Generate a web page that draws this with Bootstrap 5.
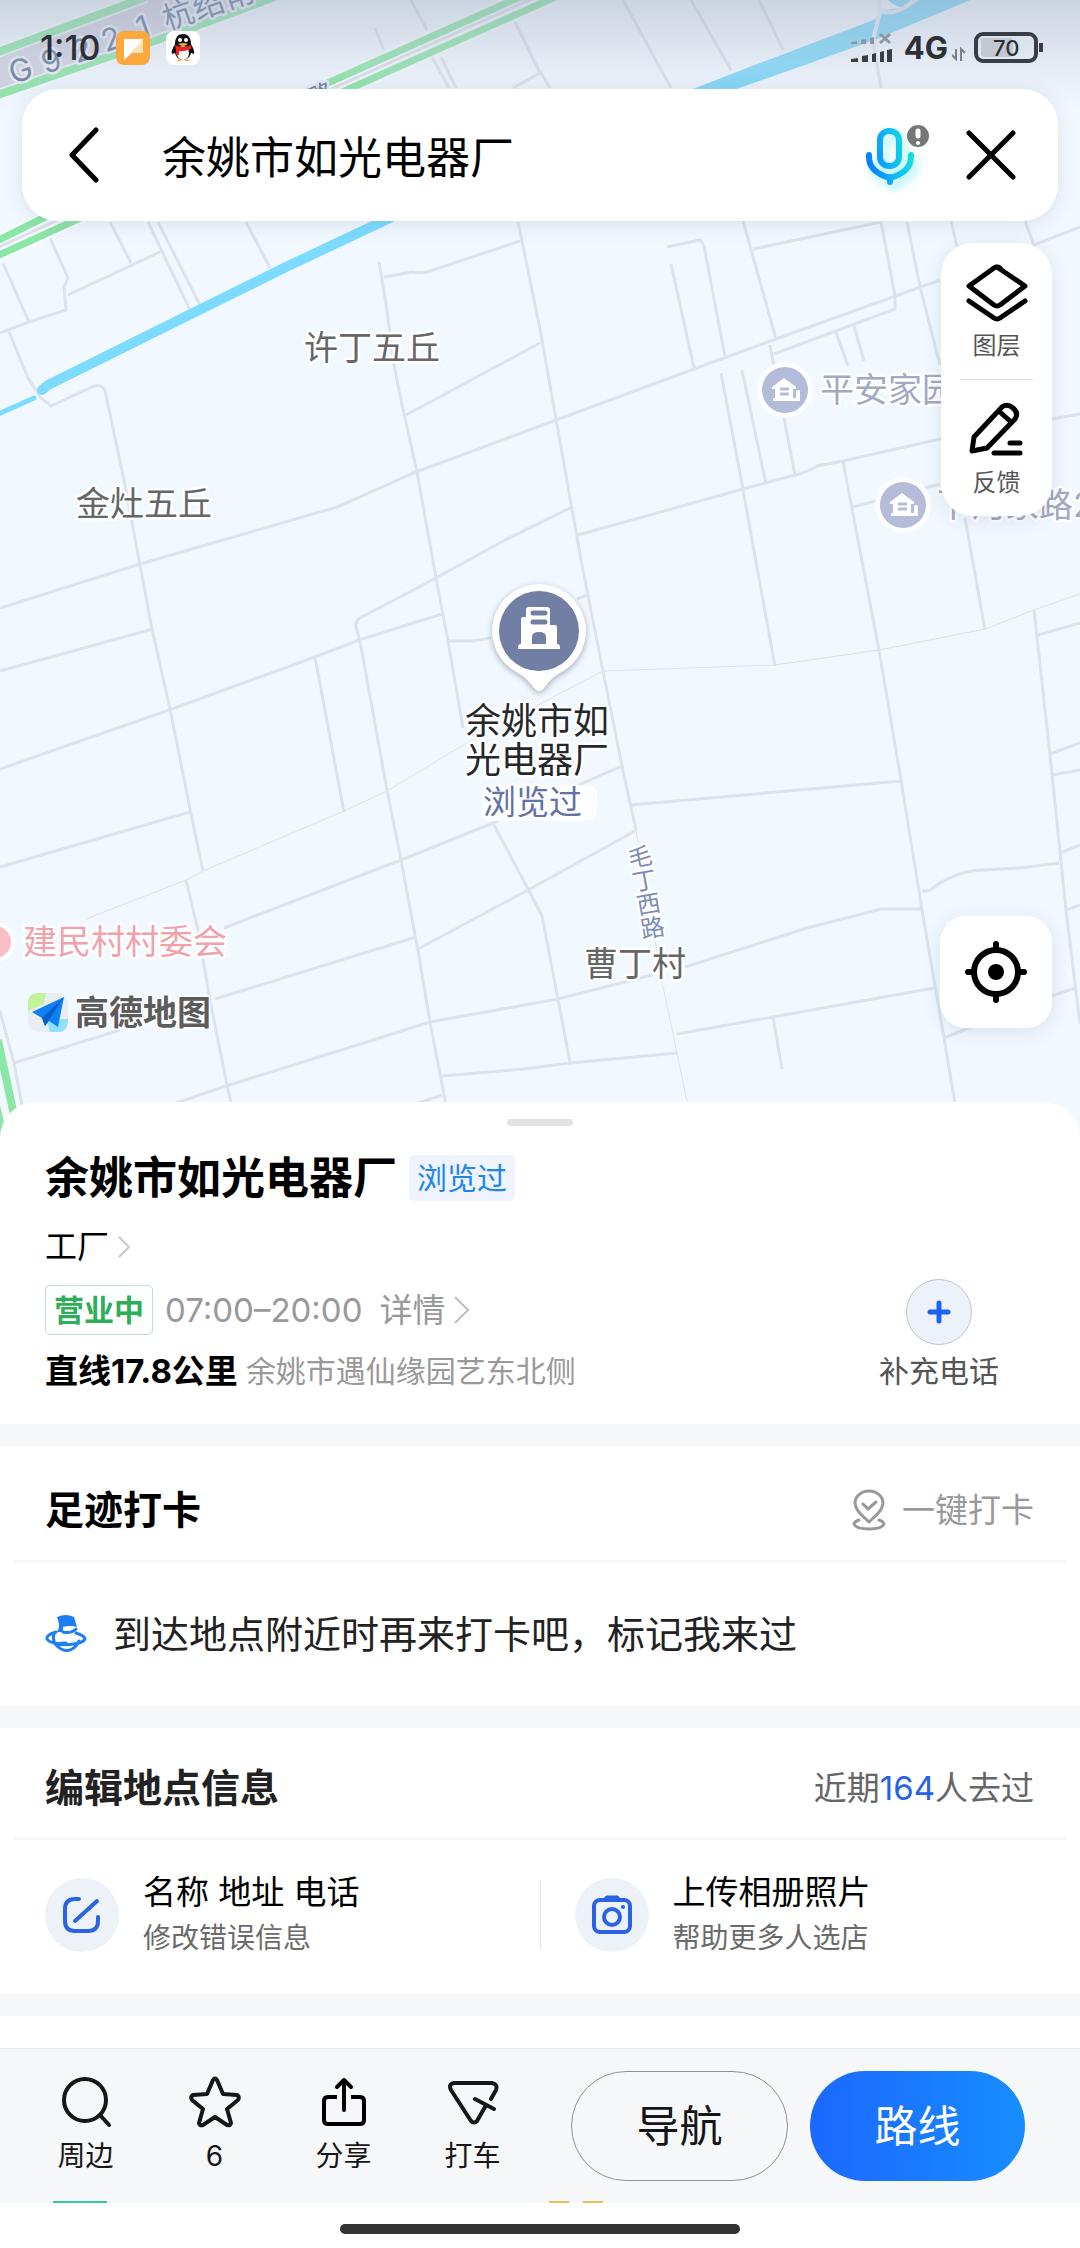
<!DOCTYPE html>
<html lang="zh-CN">
<head>
<meta charset="utf-8">
<meta name="viewport" content="width=device-width, initial-scale=1">
<title>余姚市如光电器厂</title>
<link href="https://cdn.jsdelivr.net/npm/bootstrap@5.3.0/dist/css/bootstrap.min.css" rel="stylesheet">
<style>
  body { font-family: Inter, "Noto Sans CJK SC", sans-serif; color: #000; background: #fff; font-size: 33px; line-height: 44px; }
  svg { display: block; flex-shrink: 0; }
  .plain { border: 0; background: none; padding: 0; color: inherit; }
  .stage { min-height: 1140px; background: #f1f8ff; padding-bottom: 112px; }
  .map-canvas { position: absolute; inset: 0; width: 100%; height: 100%; }
  .minor-roads path { fill: none; stroke: #dce3eb; stroke-width: 3; }
  .minor-roads .faint { stroke-width: 1; }
  .map-text { font-size: 34px; fill: #666; stroke: #fff; stroke-width: 5px; stroke-linejoin: round; paint-order: stroke; }
  .road-text { font-size: 31px; fill: #62779a; stroke: #e9edf6; }
  .street-text { font-size: 24px; fill: #7d8db8; writing-mode: vertical-rl; text-orientation: upright; }
  .poi-text { fill: #a3a8c3; }
  .status-bar { height: 89px; padding: 7px 36px 0 40px; color: #2c2f36; }
  .status-shade { position: absolute; inset: 0 0 auto 0; height: 110px; background: linear-gradient(rgba(165,175,195,.5), rgba(190,199,215,.3) 55%, rgba(240,247,255,0)); }
  .clock { font-size: 34px; font-weight: 500; }
  .net { font-size: 31px; font-weight: 700; }
  .float-card { background: #fff; box-shadow: 0 4px 20px rgba(60,80,110,.13); }
  .search-card { margin: 0 22px; height: 132px; border-radius: 36px; padding: 0 42px 0 46px; }
  .search-card input { font-size: 44px; height: 66px; margin-left: 62px; min-width: 0; outline: 0; color: #000; }
  .mic { margin-right: 29px; }
  .tool-card { width: 111px; border-radius: 32px; padding: 17px 0; }
  .tool-card button { font-size: 24px; line-height: 32px; color: #555; }
  .tool-card hr { margin: 17px 19px; border-color: #ddd; opacity: 1; }
  .locate { width: 112px; height: 112px; border-radius: 26px; }
  .side { padding: 22px 28px 0 0; }
  .sheet { margin-top: -38px; background: #fff; border-radius: 36px 36px 0 0; padding-top: 17px; }
  .grip { width: 66px; height: 7px; border-radius: 4px; background: #e2e2e2; }
  .px { padding-left: 45px; padding-right: 46px; }
  .intro { padding-bottom: 31px; }
  .title-row { padding-top: 29px; gap: 12px; }
  .facts { padding-top: 24px; }
  .place-name { font-size: 44px; line-height: 46px; font-weight: 700; }
  .seen-tag { font-size: 30px; line-height: 46px; padding: 0 8px; border-radius: 5px; background: #eef3fd; color: #1e86ea; }
  .open-tag { font-size: 30px; line-height: 48px; font-weight: 700; padding: 0 8px; margin-right: 12px; border: 1px solid #c3ddd0; border-radius: 5px; color: #2dae58; }
  .type-link { font-size: 32px; }
  .more-link { margin-left: 17px; }
  .where { margin-top: 14px; gap: 8px; }
  .soft { color: #999; }
  .t30 { font-size: 30px; }
  .add-circle { width: 66px; height: 66px; border: 1px solid #c2c5cb; border-radius: 50%; background: #ecf2f9; }
  .phone-add { margin-right: 35px; color: #555; }
  .band { height: 22px; background: #f5f6f8; }
  .sec-head { height: 114px; padding-top: 14px; }
  .sec-head h2 { font-size: 39px; line-height: 52px; font-weight: 700; }
  .edit-sec .sec-head { height: 110px; padding-top: 10px; color: #666; }
  .edit-sec h2 { color: #222; }
  .visits { color: #2562e6; }
  .rule { height: 2px; margin: 0 14px; background: #f6f6f7; }
  .checkin { height: 144px; font-size: 38px; color: #222; gap: 26px; }
  .edit-row { height: 154px; padding-bottom: 4px; }
  .edit-row .split { width: 1px; height: 70px; background: #e6e6e6; margin-right: 34px; }
  .edit-item { line-height: 46px; text-align: left; color: #000; }
  .edit-item .sub { font-size: 28px; color: #6a6a6a; }
  .disc { width: 74px; height: 74px; border-radius: 50%; background: #edf2f9; }
  .dock { background: #f5f7f9; border-top: 1px solid #e9ebed; padding: 22px 55px 22px 21px; gap: 34px; margin-top: 32px; }
  .dock .tabs { flex: 516 1 0; }
  .dock .tabs button { font-size: 28px; line-height: 40px; color: #161616; }
  .dock .pills { flex: 454 1 0; gap: 22px; }
  .pill { height: 110px; border-radius: 55px; font-size: 43px; flex: 1 1 0; }
  .pill-line { border: 1px solid #8e9093; background: #f5f7f9; color: #161616; }
  .pill-go { border: 0; background: linear-gradient(90deg, #1b68ff, #178dff); color: #fff; }
  .home-zone { height: 45px; background: #fff; padding-top: 21px; }
  .home-bar { width: 37%; height: 10px; border-radius: 5px; background: #333; }
  .peek { position: absolute; top: -2px; height: 2px; }
  .peek-green { left: 53px; width: 54px; background: #35c9a3; }
  .peek-gold { left: 549px; width: 54px; background: linear-gradient(90deg, #e6bd55 20px, transparent 20px 34px, #e6bd55 34px); }
</style>
<script src="https://cdn.jsdelivr.net/npm/bootstrap@5.3.0/dist/js/bootstrap.bundle.min.js"></script>
</head>
<body>
<div class="stage position-relative d-flex flex-column overflow-hidden">
  <svg class="map-canvas" viewBox="0 0 1080 1140" preserveAspectRatio="xMidYMin slice" role="img" aria-label="地图">
    <!-- motorway -->
    <path d="M0 51L141-1H268L186 30L0 94Z" fill="#d0d2e0"/>
    <g fill="none" stroke="#fff" stroke-width="12" opacity=".6"><path d="M-5 53L146-3M-5 96L186 30L275-3M-5 242L45 217L330 82L520-3M-5 257L76 220L351 88L560-5"/></g>
    <path d="M-5 249L60 219L340 85L536-3" fill="none" stroke="#dde0e9" stroke-width="3"/>
    <g fill="none" stroke="#8ce6a8" stroke-width="8"><path d="M-5 53L146-3M-5 96L186 30L275-3"/><path stroke-width="7" d="M-5 242L45 217L330 82L520-3M-5 257L76 220L351 88L560-5"/><path d="M-2 1040L15 1120M-10 1080L4 1140"/></g>
    <g class="minor-roads">
      <path d="M411 0L427 30M432 57L449 88M441 57L456 88M375 28L384 50M515 22L540 73L513 88M540 71L550 88M623 0L671 88M691 0L731 70M759 0L783 50M110 222L131 263M148 222L191 312M158 222L200 305M246 222L270 268"/>
      <path d="M50 238L68 278L64 287L66 310L29 322L0 333M68 295L160 252M3 263L29 322M9 332L28 378L41 398L51 406L94 386Q102 384 105 391L107 400L124 480L140 565L152 629L170 709L191 814L203 871"/>
      <path d="M379 262L387 310L394 365L401 400L417 472L436 578L448 641L463 728M384 277L412 272Q422 274 430 271L520 241M518 222L540 329L581 560L603 671M406 415L540 343"/>
      <path d="M0 608L140 564L337 507L416 472L540 426L694 369L776 339L940 280M0 671L153 629M0 769L169 710L315 657L359 640L442 614M448 641L472 641L491 638M315 657L344 812"/>
      <path d="M572 507L505 540L436 578L360 618Q355 621 356 627L360 641L387 790L401 860L418 951L430 1022L447 1110M0 867L190 812M186 880L198 930L210 1000L227 1085L233 1110M224 928L401 860L493 823L581 784L622 766"/>
      <path d="M493 823L528 889L542 916L558 999L570 1063M418 949L528 890L635 831M215 999L416 937M170 1105L226 1086L386 1036L430 1022L558 999L652 975M442 1076L524 1069L570 1063L677 1053M410 1106L442 1095M14 1063L120 1030M0 1011L14 1063L23 1110"/>
      <path d="M577 599L587 595M603 671L622 766L636 830M752 540L775 666M843 461L858 540L879 650L901 780L922 910L944 1038L956 1110M965 518L985 630M1034 610L1050 755L1066 910L1080 1024M1038 635L1080 623M1050 754L1080 743M1052 775L1080 770M1060 853L1080 845M1066 910L1080 905M1040 1000L1075 988"/>
      <path d="M630 805L901 781M922 891L929 891Q940 882 950 878Q966 870 983 870L1020 868L1059 863M685 967L807 928L881 909L921 909M677 1034L773 1017L934 988M773 1017L782 1069M944 1038L971 1027"/>
      <path d="M667 247L700 240L704 246L725 357M671 264L694 368M743 221L776 339M753 249L881 222L895 296L895 309L774 354M907 222L920 287L940 365M951 221L957 246M1025 221L1034 245L1080 227M836 332L848 366M854 326L864 361M770 345L784 418L795 475M721 373L743 489L752 540M742 370L766 484M578 535L743 489L795 475Q806 473 817 466L843 461L940 439L1080 414M853 507L940 484"/>
      <path class="faint" d="M86 919L186 880L203 871L344 811L387 791L465 744L538 705L603 671L775 665L879 650L985 629L1034 610L1080 594M636 830L662 982L689 1110"/>
    </g>
    <g fill="none" stroke="#7cdbff" stroke-linecap="round">
      <path stroke-width="5" d="M-4 415L34 398"/><path stroke-width="10" stroke-linejoin="round" d="M42 390L48 385L189 315L286 267L392 217L500 170"/>
    </g>
    <path fill="#7cd9fa" d="M500 165L698 87L747 68L871 21L876 19L880 11L905 7L919-2H975L877 39L802 66L745 86L500 175Z"/>
    <path d="M888 0Q895 8 906 7L912-2" fill="#7cd9fa"/>
    <path d="M879-2L880 12L873 40M881 12Q895 14 905 7L919-2" fill="none" stroke="#e6eaf2" stroke-width="4"/>
    <path d="M873 40L881 88" fill="none" stroke="#dce3eb" stroke-width="3"/>
    <g class="map-text road-text"><text transform="rotate(-19)" x="-15 19 52 83 120 148 180 212" y="84 85 85 84 83 83 83 83">G9221杭绍甬</text><text transform="translate(314 107) rotate(-24)" style="font-size:24px">路</text></g>
    <g class="map-text">
      <text x="304" y="360">许丁五丘</text><text x="76" y="516">金灶五丘</text><text x="584" y="976">曹丁村</text>
      <text class="poi-text" x="820" y="402">平安家园</text><text class="poi-text" x="937" y="517">下河家路2</text>
      <text x="23" y="954" style="fill:#efa2ab">建民村村委会</text>
    </g>
    <text class="map-text street-text" transform="translate(636 845) rotate(-10)">毛丁西路</text>
    <defs>
      <g id="home-poi"><circle r="28" fill="#fff" opacity=".85"/><circle r="23" fill="#b4bcda"/><path d="M-13-3L-1-12L11-3V-1H8V8H11V1Q13-1 15 1V11H-12V8H-10V-1H-13Z" fill="#fff"/><path d="M-5-1H4M-5 4H4" stroke="#b4bcda" stroke-width="3"/></g>
    </defs>
    <use href="#home-poi" x="785" y="390"/><use href="#home-poi" x="903" y="505"/>
    <circle cx="-5" cy="942" r="20" fill="#fff"/><circle cx="-5" cy="942" r="16" fill="#f9bfc5"/>
    <!-- map brand -->
    <g><rect x="28" y="993" width="40" height="39" rx="10" fill="#e9eef2"/><path d="M28 1011V1003Q28 993 38 993H46L44 1004Z" fill="#c2f29a"/><path d="M47 1022L60 1019H68Q68 1032 58 1032H50Z" fill="#8fe0fb"/><path d="M32 1012L64 997L58 1027L49 1021L45 1026L42 1018Z" fill="#0f80f5"/><path d="M42 1018L64 997L45 1026Z" fill="#0a5fd0"/></g>
    <text class="map-text" x="75" y="1025" style="font-weight:700;fill:#5c5c5c;stroke-width:3px">高德地图</text>
    <!-- selected place -->
    <g>
      <path d="M539 584a47 47 0 0 1 21 89q-9 5-15 14-6 8-12 0-6-9-15-14a47 47 0 0 1 21-89Z" fill="#fff" style="filter:drop-shadow(0 2px 3px rgba(70,80,100,.45))"/>
      <circle cx="539" cy="631" r="40" fill="#707fa3"/>
      <path d="M526 610q0-3 3-3h18q3 0 3 3v15h5q2 0 2 2v17q3 0 3 3v2h-42v-2q0-3 3-3v-25q0-2 2-2h3Z" fill="#fff"/><path d="M533 613h12M533 622h12" stroke="#707fa3" stroke-width="5" stroke-linecap="round"/><path d="M532 644v-7q0-5 7-5t7 5v7Z" fill="#707fa3"/>
    </g>
    <g class="map-text" style="font-size:36px;fill:#25272d"><text x="465" y="734">余姚市如</text><text x="465" y="773">光电器厂</text></g>
    <rect x="482" y="785" width="115" height="36" rx="8" fill="#fff" opacity=".8"/>
    <text class="map-text" x="483" y="814" style="font-size:33px;fill:#6272a4">浏览过</text>
  </svg>
  <div class="status-shade"></div>

  <div class="status-bar position-relative d-flex align-items-center">
    <span class="clock">1:10</span>
    <svg class="ms-3" width="34" height="34" viewBox="0 0 34 34"><rect width="34" height="34" rx="8" fill="#fca83f"/><path d="M8 8h19v14H16l-8 7Z" fill="#fff"/><path d="M27 8v14H16l-4 3Z" fill="#fde0b4"/></svg>
    <svg class="ms-3" width="34" height="34" viewBox="0 0 34 34"><rect width="34" height="34" rx="8" fill="#fff"/><path d="M17 3c-6 0-8 5-8 10-2 4-4 7-3 10l3-1c1 4 4 7 8 7s7-3 8-7l3 1c1-3-1-6-3-10 0-5-2-10-8-10Z" fill="#111"/><ellipse cx="17" cy="22" rx="6" ry="7" fill="#fff"/><path d="M9 14q8 4 16 0v4q-8 3-12 2v4h-3v-5Z" fill="#e22"/><circle cx="14" cy="9" r="2" fill="#fff"/><circle cx="20" cy="9" r="2" fill="#fff"/><path d="M12 13q5-2 10 0-5 4-10 0ZM10 30q3-3 6 0ZM18 30q3-3 6 0Z" fill="#f5a623"/></svg>
    <svg class="ms-auto" width="42" height="32" viewBox="0 0 42 32"><g fill="#8d95a3"><path d="M1 10l6-1v3H1ZM11 8l5-1v5h-5ZM20 6l4-1v7h-4Z"/><path d="M30 2l10 9M40 2L30 11" stroke="#8d95a3" stroke-width="3"/></g><path d="M1 27l7-1v4H1ZM12 24l6-1v7h-6ZM22 22l4-1v9h-4ZM30 20l4-1v11h-4ZM37 18l5-1v13h-5Z" fill="#3a3d44"/></svg>
    <span class="net ms-2 ps-1">4G</span>
    <svg class="ms-1" width="14" height="30" viewBox="0 0 14 30"><path d="M4 16v10l-4-4M9 28V16l4 4" fill="none" stroke="#7a7f8a" stroke-width="2"/></svg>
    <svg class="ms-2" width="70" height="32" viewBox="0 0 70 32"><rect x="2" y="2" width="60" height="27" rx="7" fill="none" stroke="#3a3d44" stroke-width="4"/><rect x="7" y="6" width="32" height="19" rx="3" fill="#c3c8d1"/><path d="M67 11v9" stroke="#3a3d44" stroke-width="4"/><text x="19" y="24" font-size="22" font-weight="500" fill="#2c2f36">70</text></svg>
  </div>

  <div class="search-card float-card position-relative d-flex align-items-center">
    <button class="plain" aria-label="返回"><svg width="32" height="56" viewBox="0 0 32 56"><path d="M28 3L4 28L28 53" fill="none" stroke="#000" stroke-width="5" stroke-linecap="round" stroke-linejoin="round"/></svg></button>
    <input class="plain flex-grow-1" type="text" aria-label="搜索地点" value="余姚市如光电器厂">
    <button class="plain mic" aria-label="语音搜索"><svg width="76" height="76" viewBox="0 0 76 76"><defs><linearGradient id="mic" gradientUnits="userSpaceOnUse" x1="5" y1="40" x2="53" y2="30"><stop stop-color="#0a7bff"/><stop offset=".5" stop-color="#12b8f5"/><stop offset="1" stop-color="#10e8d8"/></linearGradient></defs>
      <g fill="none" stroke="url(#mic)" stroke-linecap="round" style="filter:drop-shadow(4px 6px 5px rgba(60,225,235,.45))"><rect x="19" y="14" width="19" height="35" rx="9" stroke-width="6"/><path d="M8 38v2q0 15 21 21Q50 55 50 40v-2M29 60v5" stroke-width="6"/></g><circle cx="57" cy="19" r="11" fill="#777"/><path d="M57 14v5" stroke="#fff" stroke-width="5" stroke-linecap="round"/><circle cx="57" cy="26" r="2" fill="#fff"/></svg></button>
    <button class="plain" aria-label="清除"><svg width="50" height="50" viewBox="0 0 50 50"><path d="M3 3L47 47M47 3L3 47" stroke="#000" stroke-width="5" stroke-linecap="round"/></svg></button>
  </div>

  <div class="side position-relative d-flex flex-column align-items-end flex-grow-1">
    <div class="tool-card float-card d-flex flex-column">
      <button class="plain d-flex flex-column align-items-center"><svg width="66" height="70" viewBox="0 0 66 70"><g fill="none" stroke="#000" stroke-width="5" stroke-linejoin="round" stroke-linecap="round"><path d="M33 7L61 26L36 45Q33 47 30 45L5 26L30 8Q33 6 36 8Z"/><path d="M5 41L30 58Q33 60 36 58L61 41"/></g></svg>图层</button>
      <hr>
      <button class="plain d-flex flex-column align-items-center"><svg width="66" height="70" viewBox="0 0 66 70"><g fill="none" stroke="#000" stroke-width="5" stroke-linejoin="round" stroke-linecap="round"><path d="M8 54L10 40L38 10Q43 6 49 11Q55 16 51 22L23 51Z"/><path d="M36 15L47 25M46 46H56M30 56H56"/></g></svg>反馈</button>
    </div>
    <button class="plain locate float-card mt-auto d-flex align-items-center justify-content-center" aria-label="定位"><svg width="62" height="62" viewBox="0 0 62 62"><circle cx="31" cy="31" r="22" fill="none" stroke="#000" stroke-width="6"/><circle cx="31" cy="31" r="8"/><path d="M31 3v6M31 53v6M3 31h6M53 31h6" stroke="#000" stroke-width="6" stroke-linecap="round"/></svg></button>
  </div>
</div>

<main class="sheet position-relative">
  <div class="grip mx-auto"></div>
  <section class="px intro">
    <div class="title-row d-flex align-items-center"><h1 class="place-name m-0">余姚市如光电器厂</h1><span class="seen-tag">浏览过</span></div>
    <div class="facts d-flex justify-content-between align-items-end">
      <div>
        <button class="plain type-link d-flex align-items-center gap-2">工厂 <svg width="14" height="24" viewBox="0 0 14 24"><path d="M2 2L12 12L2 22" fill="none" stroke="#c8c8c8" stroke-width="2"/></svg></button>
        <div class="d-flex align-items-center soft mt-3"><span class="open-tag">营业中</span><span>07:00–20:00</span>
          <button class="plain more-link d-flex align-items-center gap-2">详情 <svg width="18" height="30" viewBox="0 0 18 30"><path d="M2 2L15 15L2 28" fill="none" stroke="#bdbdbd" stroke-width="2"/></svg></button></div>
        <div class="where d-flex"><strong>直线17.8公里</strong><span class="soft t30">余姚市遇仙缘园艺东北侧</span></div>
      </div>
      <button class="plain phone-add d-flex flex-column align-items-center gap-1 t30"><span class="add-circle d-flex align-items-center justify-content-center"><svg width="24" height="24" viewBox="0 0 24 24"><path d="M12 3v18M3 12h18" stroke="#1f62ef" stroke-width="5" stroke-linecap="round"/></svg></span>补充电话</button>
    </div>
  </section>
  <div class="band"></div>
  <section>
    <div class="sec-head px d-flex align-items-center justify-content-between"><h2 class="m-0">足迹打卡</h2>
      <button class="plain d-flex align-items-center soft gap-3"><svg width="34" height="42" viewBox="0 0 34 42"><g fill="none" stroke="#999" stroke-width="3" stroke-linecap="round" stroke-linejoin="round"><path d="M17 33C10 26 3 21 3 14a14 12 0 0 1 28 0C31 21 24 26 17 33Z"/><path d="M11 15L16 20L24 13M7 31Q2 33 2 35Q4 40 17 40Q30 40 32 35Q32 33 27 31"/></g></svg>一键打卡</button></div>
    <div class="rule"></div>
    <div class="checkin px d-flex align-items-center"><svg width="42" height="40" viewBox="0 0 42 40"><path d="M12 3Q21-1 29 3L32 13Q25 11 18 13V18H12Q16 12 12 3Z" fill="#1c80f3"/><g fill="none" stroke="#1c80f3" stroke-width="3" stroke-linecap="round"><path d="M11 18Q1 21 2 25Q6 31 21 29M31 19Q40 22 40 25Q38 29 29 30Q18 32 9 29M9 20Q7 27 12 32Q22 41 31 32L34 27M18 18Q26 20 31 15"/></g></svg><span>到达地点附近时再来打卡吧，标记我来过</span></div>
  </section>
  <div class="band"></div>
  <section class="edit-sec">
    <div class="sec-head px d-flex align-items-center justify-content-between"><h2 class="m-0">编辑地点信息</h2><span>近期<span class="visits">164</span>人去过</span></div>
    <div class="rule"></div>
    <div class="edit-row px d-flex align-items-center">
      <button class="plain edit-item d-flex align-items-center col-6 gap-4"><span class="disc d-flex align-items-center justify-content-center"><svg width="42" height="42" viewBox="0 0 42 42"><path d="M18 5H14Q4 5 4 15V27Q4 37 14 37H27Q37 37 37 27V23M14 27L36 7" fill="none" stroke="#2a63e4" stroke-width="4" stroke-linecap="round"/></svg></span><span>名称 地址 电话<span class="sub d-block">修改错误信息</span></span></button>
      <span class="split"></span>
      <button class="plain edit-item d-flex align-items-center gap-4"><span class="disc d-flex align-items-center justify-content-center"><svg width="42" height="42" viewBox="0 0 42 42"><g fill="none" stroke="#2a63e4" stroke-width="4"><rect x="3" y="6" width="36" height="32" rx="6"/><circle cx="21" cy="23" r="8"/></g><path d="M13 5l2-3h12l2 3Z" fill="#2a63e4" stroke="#2a63e4"/><circle cx="32" cy="13" r="2" fill="#2a63e4"/></svg></span><span>上传相册照片<span class="sub d-block">帮助更多人选店</span></span></button>
    </div>
  </section>
  <div class="band"></div>
</main>

<footer>
  <div class="dock d-flex align-items-center">
    <nav class="tabs row row-cols-4 g-0">
      <button class="plain col d-flex flex-column align-items-center gap-2"><svg width="52" height="52" viewBox="0 0 52 52"><g fill="none" stroke="#161616" stroke-width="4" stroke-linecap="round"><circle cx="25" cy="24" r="21"/><path d="M40 39L49 49"/></g></svg>周边</button>
      <button class="plain col d-flex flex-column align-items-center gap-2"><svg width="52" height="52" viewBox="0 0 52 52"><path d="M24 4Q26 1 28 4L34 18L48 19Q51 21 49 24L38 33L42 47Q41 50 38 49L26 41L14 49Q11 50 10 47L14 33L3 24Q1 21 4 19L18 18Z" fill="none" stroke="#161616" stroke-width="4" stroke-linejoin="round"/></svg>6</button>
      <button class="plain col d-flex flex-column align-items-center gap-2"><svg width="52" height="52" viewBox="0 0 52 52"><g fill="none" stroke="#000" stroke-width="4" stroke-linejoin="round"><path d="M19 21H10Q6 21 6 25V44Q6 48 10 48H42Q46 48 46 44V25Q46 21 42 21H33"/><path d="M26 34V4M19 11L26 4L33 11" stroke-linecap="round"/></g></svg>分享</button>
      <button class="plain col d-flex flex-column align-items-center gap-2"><svg width="52" height="52" viewBox="0 0 52 52"><path d="M44 23L49 14Q51 8 45 7H7Q1 8 4 14L24 45Q27 48 30 45L38 31M28 23L47 33" fill="none" stroke="#161616" stroke-width="4" stroke-linecap="round" stroke-linejoin="round"/></svg>打车</button>
    </nav>
    <div class="pills d-flex"><button class="pill pill-line">导航</button><button class="pill pill-go">路线</button></div>
  </div>
  <div class="home-zone position-relative d-flex justify-content-center"><span class="peek peek-green"></span><span class="peek peek-gold"></span><div class="home-bar"></div></div>
</footer>
</body>
</html>
